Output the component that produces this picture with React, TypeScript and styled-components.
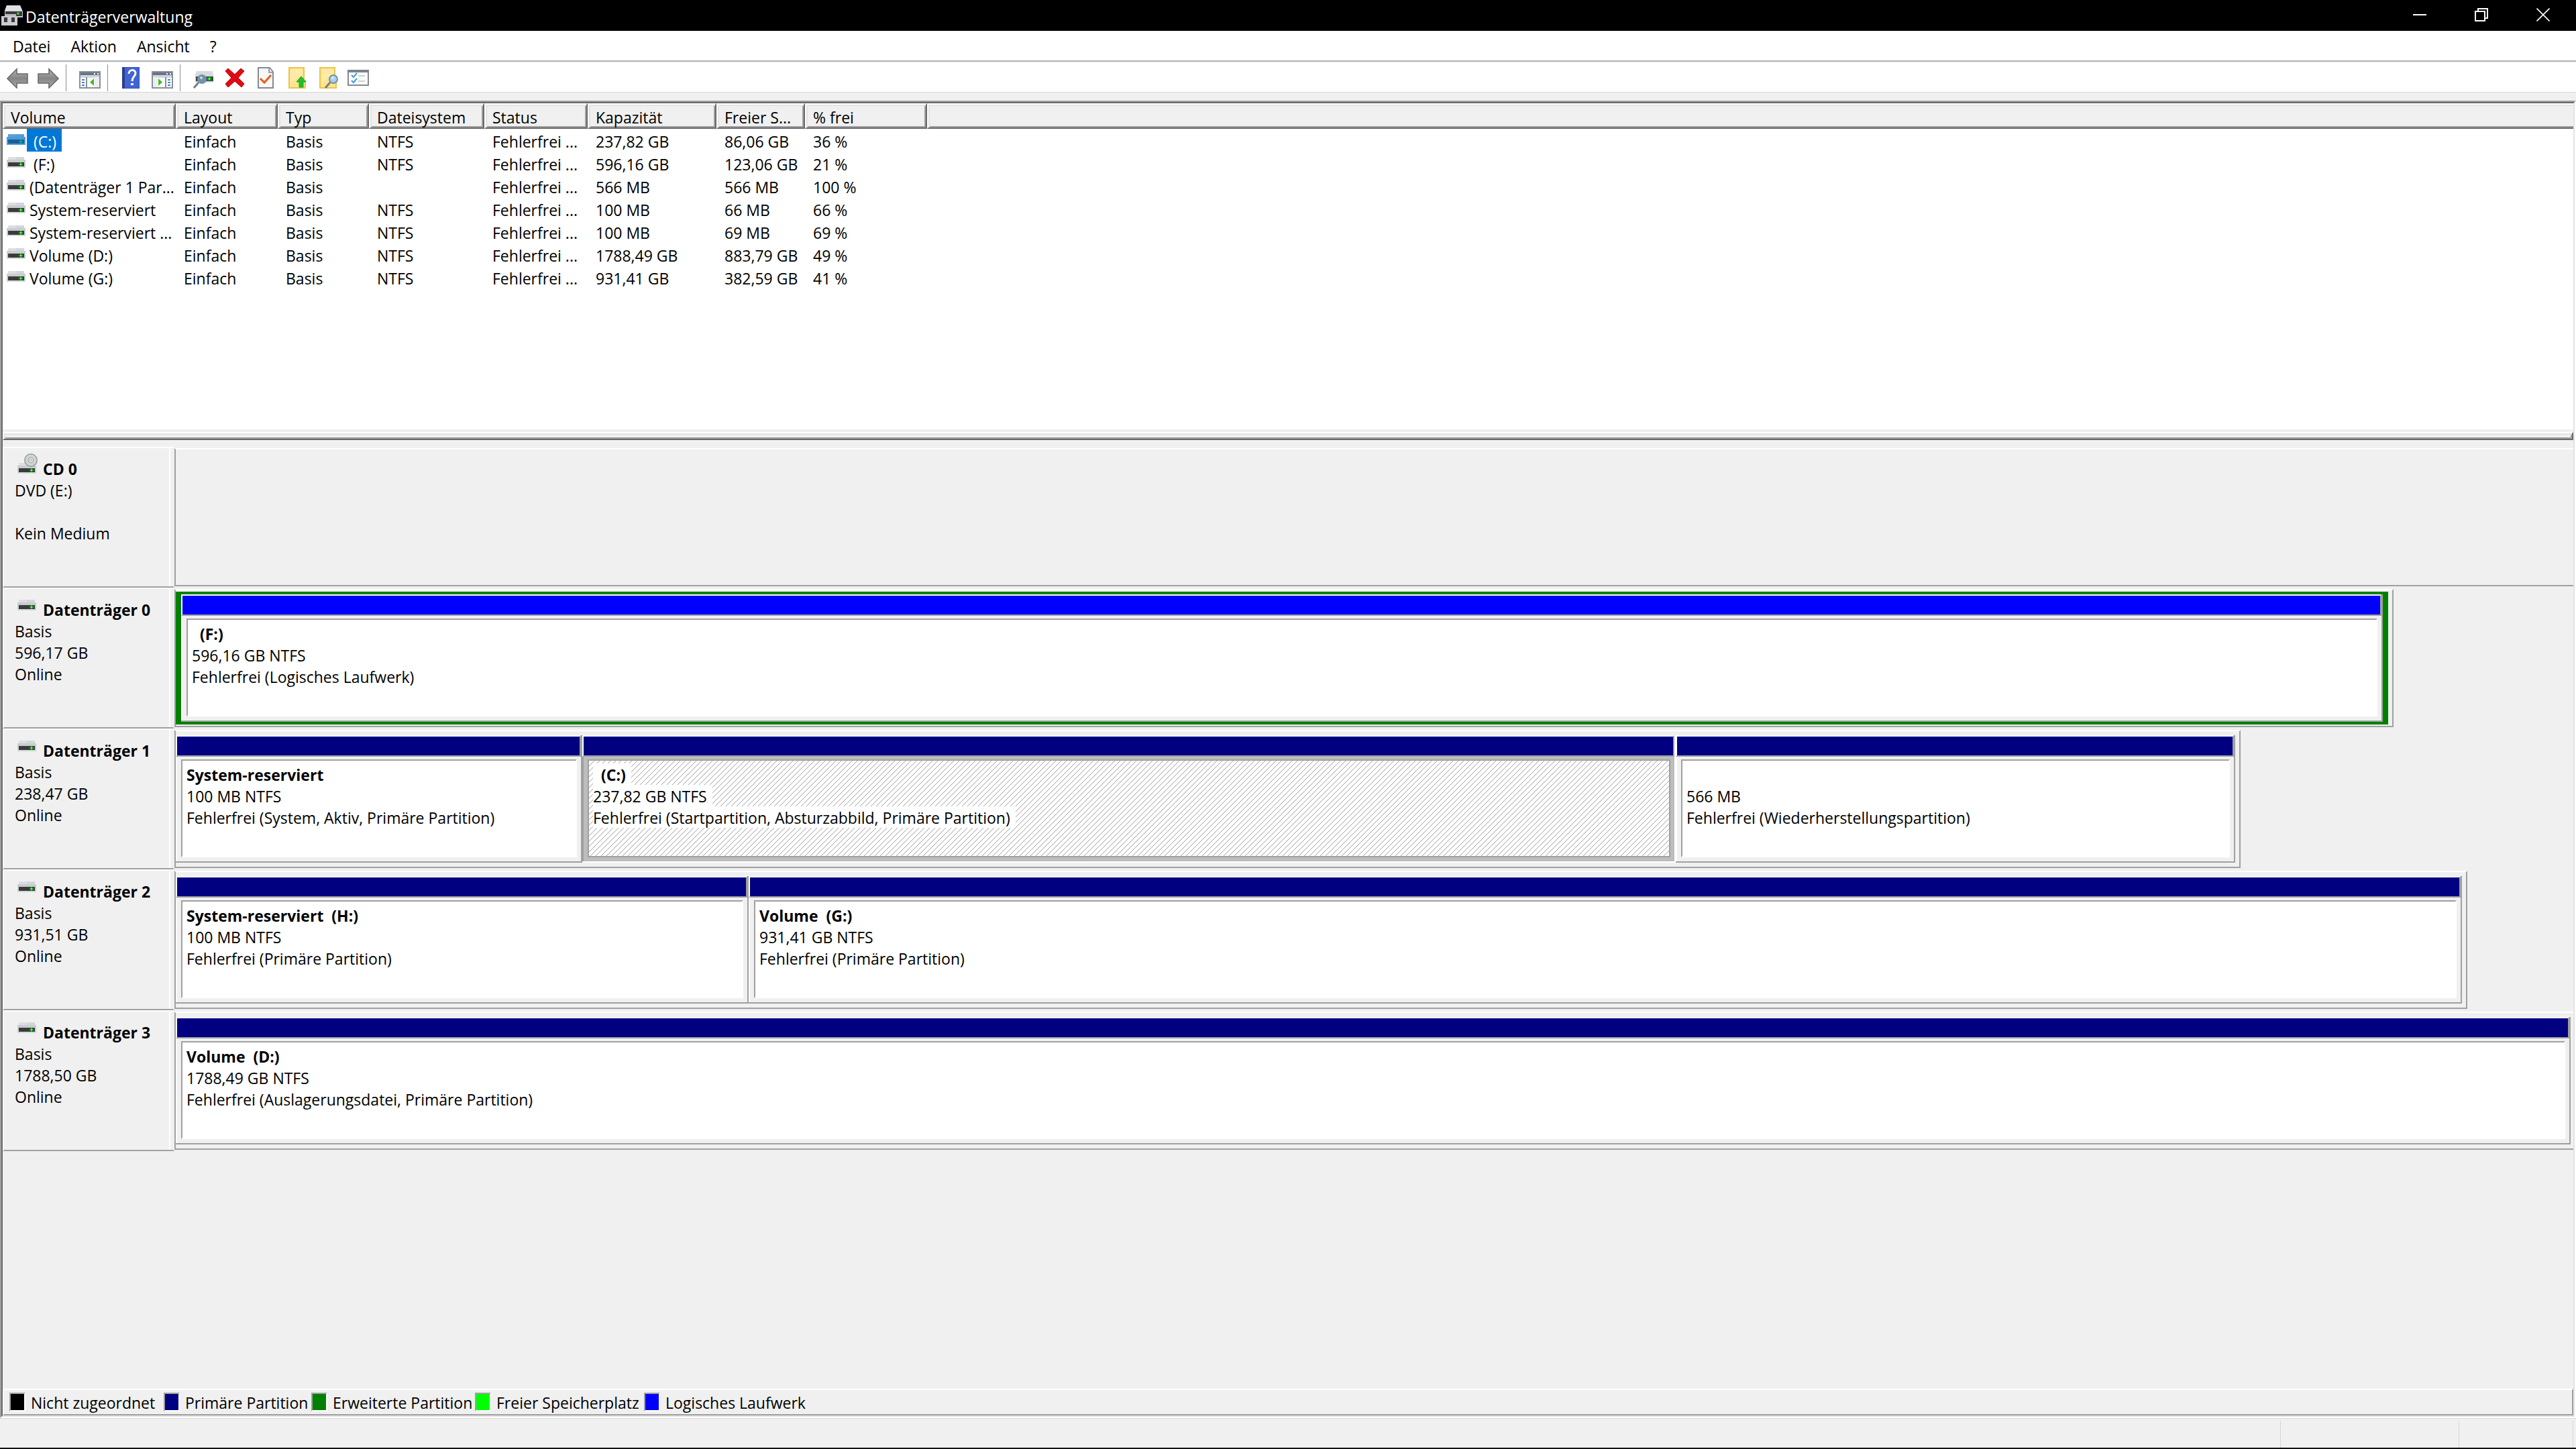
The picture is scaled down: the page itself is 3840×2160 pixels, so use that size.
import React from "react";
import styled, { createGlobalStyle, css } from "styled-components";

const color = {
  face: "#f0f0f0",
  light: "#e3e3e3",
  shadow: "#a0a0a0",
  dark: "#696969",
  white: "#ffffff",
  line: "#d7d7d7",
  highlight: "#0078d7",
  primary: "#000080",
  extended: "#008000",
  free: "#00ff00",
  logical: "#0000ff",
  unallocated: "#000000",
};

const GlobalStyle = createGlobalStyle`
  *, *::before, *::after { box-sizing: border-box; }
  body {
    margin: 0;
    background: ${color.face};
    color: #000;
    font-family: "Open Sans", "Noto Sans", sans-serif;
    font-size: 23px;
    line-height: 32px;
  }
  button {
    font: inherit;
    color: inherit;
    background: none;
    border: 0;
    padding: 0;
    margin: 0;
  }
`;

const Window = styled.div`
  display: flex;
  flex-direction: column;
  min-height: 100vh;
  border-bottom: 2px solid #111;
`;

/* ---------- title bar, menu, toolbar ---------- */

const TitleBar = styled.header`
  display: flex;
  align-items: center;
  height: 46px;
  padding: 0 3px 0 2px;
  background: #000;
  color: #fff;
`;

const Title = styled.h1`
  flex: 1;
  margin: 0 0 0 4px;
  padding-top: 3px;
  font-size: inherit;
  font-weight: 400;
`;

const CaptionButton = styled.button`
  display: flex;
  align-items: center;
  justify-content: center;
  width: 92px;
  height: 46px;
  padding-bottom: 2px;
`;

const MenuBar = styled.nav`
  display: flex;
  height: 46px;
  padding: 0 4px;
  background: #fff;
  border-bottom: 2px solid #b4b4b4;
`;

const MenuItem = styled.button`
  padding: 2px 15px 0;
`;

const ToolBar = styled.div`
  display: flex;
  align-items: flex-start;
  height: 46px;
  padding: 2px 3px 0;
  background: #fff;
  border-top: 2px solid #f1f7fc;
  border-bottom: 1px solid ${color.line};
`;

const ToolButton = styled.button`
  display: flex;
  align-items: center;
  justify-content: center;
  width: 46px;
  height: 40px;
`;

const ToolSeparator = styled.span`
  width: 16px;
  height: 40px;
  padding-left: 3px;

  &::before {
    content: "";
    display: block;
    width: 1px;
    height: 100%;
    background: #8d8d8d;
  }
`;

/* ---------- frame ---------- */

const FrameOuter = styled.main`
  flex: 1;
  display: flex;
  flex-direction: column;
  margin-top: 12px;
  border: 2px solid;
  border-color: ${color.shadow} ${color.white} ${color.white} ${color.shadow};
`;

const FrameInner = styled.div`
  flex: 1;
  display: flex;
  flex-direction: column;
  border: 2px solid;
  border-color: ${color.dark} ${color.light} ${color.light} ${color.dark};
`;

const Splitter = styled.div`
  height: 12px;
  margin-top: 4px;
  border: 2px solid;
  border-color: ${color.white} ${color.dark} ${color.dark} ${color.white};
  box-shadow: inset 2px 2px 0 ${color.light}, inset -2px -2px 0 ${color.shadow};
`;

/* ---------- volume list ---------- */

const ListPane = styled.section`
  min-height: 22.5vh;
  background: #fff;
`;

const VolumeTable = styled.table`
  width: 100%;
  table-layout: fixed;
  border-collapse: separate;
  border-spacing: 0;
  line-height: 30px;
`;

const Column = styled.col<{ $width?: number }>`
  ${(p) => p.$width && css`width: ${p.$width}px;`}
`;

const HeadCell = styled.th<{ $last?: boolean }>`
  height: 38px;
  padding: 4px 0 0 10px;
  background: ${color.face};
  border: 2px solid;
  border-color: ${color.white} ${color.dark} ${color.dark} ${color.white};
  box-shadow: inset 2px 2px 0 ${color.light}, inset -2px -2px 0 ${color.shadow};
  font-weight: 400;
  text-align: left;
  white-space: nowrap;
  overflow: hidden;
  ${(p) =>
    p.$last &&
    css`
      border-right: 0;
      box-shadow: inset 2px 2px 0 ${color.light}, inset 0 -2px 0 ${color.shadow};
    `}
`;

const Cell = styled.td`
  height: 34px;
  padding: 4px 0 0 12px;
  white-space: nowrap;
`;

const NameCell = styled.td`
  height: 34px;
  padding: 0 0 0 4px;
`;

const NameBox = styled.div`
  display: flex;
  height: 34px;
`;

const VolumeName = styled.span<{ $selected: boolean }>`
  padding: 4px 8px 0 4px;
  white-space: pre;
  ${(p) =>
    p.$selected &&
    css`
      background: ${color.highlight};
      color: #fff;
    `}
`;

/* ---------- disk view ---------- */

const DiskPane = styled.section`
  flex: 1;
  padding: 10px 0 24px;
`;

const DiskRow = styled.article`
  display: flex;
  height: 210px;
`;

const DiskLabel = styled.div`
  width: 256px;
  padding: 8px 0 0 16px;
  border: 2px solid;
  border-color: ${color.white} ${color.face} ${color.shadow} ${color.white};
  box-shadow: inset -4px 0 0 ${color.face}, inset -6px 0 0 ${color.white};
`;

const DiskTitle = styled.div`
  display: flex;
  align-items: flex-start;
  gap: 8px;
  height: 38px;
  padding-left: 2px;
`;

const DiskName = styled.h2`
  margin: 7px 0 0;
  font-size: inherit;
  font-weight: 700;
`;

const DiskLine = styled.div`
  height: 32px;
  padding-top: 1px;
`;

const Track = styled.div`
  flex: 1;
  display: flex;
  min-width: 0;
  padding: 2px 0;
`;

const Graph = styled.div<{ $size: number; $open: boolean; $extended: boolean }>`
  flex: ${(p) => p.$size} 1 0;
  display: flex;
  min-width: 0;
  padding: ${(p) => (p.$extended ? "2px 6px 2px 0" : "6px 6px 6px 0")};
  border: 2px solid;
  border-color: ${color.white} ${color.shadow} ${color.shadow} ${color.shadow};
  ${(p) =>
    p.$open &&
    css`
      border-right: 0;
      padding-right: 4px;
    `}
`;

const Rest = styled.div<{ $size: number }>`
  flex: ${(p) => p.$size} 1 0;
`;

const Extended = styled.div`
  flex: 1;
  display: flex;
  min-width: 0;
  padding: 4px 8px;
  background: ${color.extended};
`;

const Partition = styled.div<{ $size: number; $selected: boolean }>`
  flex: ${(p) => p.$size} 1 0;
  display: flex;
  flex-direction: column;
  min-width: 0;
  background: ${(p) => (p.$selected ? "#bdbdbd" : color.face)};
  border-right: 2px solid ${(p) => (p.$selected ? color.white : color.shadow)};
  border-bottom: 2px solid ${(p) => (p.$selected ? color.white : color.shadow)};
`;

const PartitionBar = styled.div<{ $fill: string }>`
  height: 32px;
  background: ${(p) => p.$fill};
  border: 2px solid;
  border-color: ${color.white} ${color.shadow} ${color.shadow} ${color.white};
`;

const PartitionBody = styled.div<{ $selected: boolean }>`
  flex: 1;
  display: flex;
  padding: 4px 6px 6px;
  border-left: 2px solid ${(p) => (p.$selected ? color.shadow : color.white)};
`;

const PartitionInfo = styled.div<{ $selected: boolean }>`
  flex: 1;
  min-width: 0;
  padding: 4px 6px 0;
  background: #fff;
  border: 2px solid;
  border-color: ${color.shadow} ${color.white} ${color.white} ${color.shadow};
  ${(p) =>
    p.$selected &&
    css`
      border-color: ${color.shadow};
      background: url("data:image/svg+xml,%3Csvg xmlns='http://www.w3.org/2000/svg' width='8' height='8' shape-rendering='crispEdges' fill='%23a0a0a0'%3E%3Cpath d='M0 7h1v1h-1zM1 6h1v1h-1zM2 5h1v1h-1zM3 4h1v1h-1zM4 3h1v1h-1zM5 2h1v1h-1zM6 1h1v1h-1zM7 0h1v1h-1z'/%3E%3C/svg%3E")
        #fff;
    `}
`;

const InfoLine = styled.div<{ $strong?: boolean }>`
  width: fit-content;
  height: 32px;
  padding: 1px 8px 0 0;
  background: #fff;
  white-space: pre;
  font-weight: ${(p) => (p.$strong ? 700 : 400)};
`;

/* ---------- legend and status bar ---------- */

const Legend = styled.ul`
  display: grid;
  grid-template-columns: 230px 220px 244px 252px auto;
  height: 40px;
  margin: 0;
  padding: 3px 8px 0;
  list-style: none;
  border: 2px solid;
  border-color: ${color.white} ${color.shadow} ${color.shadow} ${color.white};
`;

const LegendItem = styled.li`
  display: flex;
  gap: 8px;
  white-space: nowrap;
`;

const Swatch = styled.span<{ $fill: string }>`
  width: 24px;
  height: 28px;
  margin-top: 1px;
  background: ${(p) => p.$fill};
  border: 2px solid;
  border-color: ${color.shadow} ${color.white} ${color.white} ${color.shadow};
`;

const StatusBar = styled.footer`
  display: flex;
  justify-content: flex-end;
  height: 44px;
  padding: 3px 4px 0 0;
  border-top: 1px solid ${color.line};
`;

const StatusPane = styled.div<{ $width: number }>`
  width: ${(p) => p.$width}px;
  border-right: 1px solid ${color.line};
`;

/* ---------- icons ---------- */

const Svg = styled.svg`
  display: block;
  flex: none;
`;

const DriveShape = ({ y = 8 }: { y?: number }) => (
  <g transform={`translate(2 ${y})`} shapeRendering="crispEdges">
    <rect x="2" y="0" width="24" height="5" fill="#dcdee2" />
    <rect x="14" y="0" width="12" height="5" fill="#d3d6da" />
    <rect x="0" y="4" width="28" height="12" fill="#c9ccd1" />
    <rect x="0" y="14" width="28" height="2" fill="#d5d8dd" />
    <rect x="2" y="8" width="24" height="6" fill="#3b3b3b" />
    <rect x="18" y="8" width="6" height="6" fill="#1c5a1c" />
    <rect x="20" y="8" width="2" height="6" fill="#2ca52c" />
    <rect x="18" y="10" width="6" height="2" fill="#2ca52c" />
    <rect x="20" y="10" width="2" height="2" fill="#7dff6a" />
  </g>
);

const DriveIcon = ({ selected = false }: { selected?: boolean }) => (
  <Svg width="32" height="32" viewBox="0 0 32 32" aria-hidden="true">
    <DriveShape />
    {selected && (
      <>
        <defs>
          <pattern id="veil" width="2" height="2" patternUnits="userSpaceOnUse">
            <path d="M0 0h1v1h1v1h-1v-1h-1z" fill={color.highlight} />
          </pattern>
        </defs>
        <path d="M4 8h24v4h2v12h-28v-12h2z" fill={color.highlight} opacity="0.2" />
        <path d="M4 8h24v4h2v12h-28v-12h2z" fill="url(#veil)" />
      </>
    )}
  </Svg>
);

const DiscIcon = () => (
  <Svg width="32" height="32" viewBox="0 0 32 32" aria-hidden="true">
    <DriveShape y={14} />
    <circle cx="22" cy="10" r="9.2" fill="#d3d6d6" stroke="#979a9c" strokeWidth="1.6" />
    <circle cx="22" cy="10" r="4" fill="#f3f3f3" stroke="#9a9d9f" strokeWidth="1.2" />
    <circle cx="22" cy="10" r="1.8" fill="#fff" stroke="#9a9d9f" strokeWidth="1" />
  </Svg>
);

const AppIcon = () => (
  <Svg width="32" height="32" viewBox="0 0 32 32" aria-hidden="true">
    <path d="M8 1h20l4 9v9h-27v-9z" fill="#c6c9cc" />
    <path d="M8 1h20l3 8h-26z" fill="#dfe1e4" />
    <rect x="6" y="10" width="25" height="7" fill="#3a3a3a" />
    <circle cx="25" cy="13" r="2" fill="#35c435" />
    <path d="M3 17h3v-3h16v3h2v14h-21z" fill="#b9bbbf" />
    <path d="M0 17h24v14h-24z" fill="#c9cbce" />
    <rect x="4" y="19" width="5" height="7" fill="#3a3a3a" />
    <rect x="15" y="19" width="5" height="7" fill="#3a3a3a" />
  </Svg>
);

const ArrowIcon = ({ flip = false }: { flip?: boolean }) => (
  <Svg width="32" height="32" viewBox="0 0 32 32" aria-hidden="true">
    <defs>
      <linearGradient id="steel" x1="0" y1="0" x2="0" y2="1">
        <stop offset="0" stopColor="#b5b5b5" />
        <stop offset="0.5" stopColor="#858585" />
        <stop offset="1" stopColor="#b0b0b0" />
      </linearGradient>
    </defs>
    <path
      transform={flip ? "translate(32 0) scale(-1 1)" : undefined}
      d="M1 17L15 3v7h16v14H15v7z"
      fill="url(#steel)"
      stroke="#6a6a6a"
      strokeWidth="1.6"
    />
  </Svg>
);

const PaneIcon = ({ mirror = false }: { mirror?: boolean }) => (
  <Svg width="32" height="32" viewBox="0 0 32 32" aria-hidden="true">
    <rect x="1" y="7" width="30" height="24" fill="#fff" stroke="#8a8f96" strokeWidth="2" />
    <rect x="2" y="8" width="28" height="5" fill="#66758b" />
    <rect x="2" y="12" width="28" height="4" fill="#d2d7de" />
    <path d="M22 9h2v2h-2zM27 9h2v2h-2z" fill="#fff" />
    <g transform={mirror ? "translate(32 0) scale(-1 1)" : undefined}>
      <rect x="10" y="15" width="2" height="15" fill="#8a8f96" />
      <path d="M4 18h4v2h-4zM4 22h4v2h-4zM4 26h4v2h-4z" fill="#3c83c8" />
      <rect x="23" y="15" width="7" height="15" fill="#eceef0" />
      <path d="M22 17v11l-6-5.500z" fill="#4bb52b" />
    </g>
  </Svg>
);

const HelpIcon = () => (
  <Svg width="32" height="32" viewBox="0 0 32 32" aria-hidden="true">
    <rect x="2" y="0" width="26" height="32" fill="#2c4fc0" />
    <rect x="2" y="0" width="4" height="32" fill="#2a3f8e" />
    <rect x="6" y="1" width="21" height="30" fill="#4365d2" />
    <path
      d="M12 10c0-7 10-7 10-1 0 5-5 5-5 12"
      fill="none"
      stroke="#fff"
      strokeWidth="3"
    />
    <rect x="15" y="24" width="4" height="3" fill="#fff" />
  </Svg>
);

const Lens = ({ x, y, glass = "#a9d0e8" }: { x: number; y: number; glass?: string }) => (
  <g>
    <path d={`M${x - 5} ${y + 5}L${x - 12} ${y + 13}`} stroke="#6f7f8d" strokeWidth="3" />
    <circle cx={x} cy={y} r="6" fill={glass} stroke="#7590a5" strokeWidth="2" />
    <circle cx={x - 1} cy={y - 2} r="2" fill="#e4f4fd" opacity="0.7" />
  </g>
);

const RescanIcon = () => (
  <Svg width="32" height="32" viewBox="0 0 32 32" aria-hidden="true">
    <path d="M5 6h24l1 5v12h-27v-12z" fill="#d8dade" />
    <rect x="4" y="14" width="26" height="7" fill="#3f4347" />
    <rect x="21" y="15" width="6" height="5" fill="#0f9c1d" />
    <rect x="23" y="16" width="2" height="3" fill="#5dff5a" />
    <Lens x={13} y={18} glass="#6f93ad" />
  </Svg>
);

const DeleteIcon = () => (
  <Svg width="32" height="32" viewBox="0 0 32 32" aria-hidden="true">
    <path
      d="M6 2l10 9 9-9 5 4-9 10 9 9-4 5-10-9-10 9-4-5 9-9-9-10z"
      fill="#df0b14"
      stroke="#c00000"
      strokeWidth="1"
    />
  </Svg>
);

const CheckPageIcon = () => (
  <Svg width="32" height="32" viewBox="0 0 32 32" aria-hidden="true">
    <path d="M5 1h17l5 6v24h-22z" fill="#f8f8f8" stroke="#85898f" strokeWidth="2" />
    <path d="M21 1v7h6" fill="#dfe2e6" stroke="#85898f" strokeWidth="1.500" />
    <path d="M8 17l6 6 10-11" fill="none" stroke="#ee5a1c" strokeWidth="3" />
  </Svg>
);

const FolderShape = () => (
  <g>
    <path d="M5 1h22v20h2v10h-24z" fill="#ffe48f" stroke="#e9c54f" strokeWidth="2" />
    <path d="M7 3h18v8l-18 12z" fill="#ffeaa6" />
  </g>
);

const FolderUpIcon = () => (
  <Svg width="32" height="32" viewBox="0 0 32 32" aria-hidden="true">
    <FolderShape />
    <path d="M23 14l7 8h-4v8h-6v-8h-4z" fill="#22c02b" stroke="#14a31d" strokeWidth="1" />
  </Svg>
);

const FolderSearchIcon = () => (
  <Svg width="32" height="32" viewBox="0 0 32 32" aria-hidden="true">
    <FolderShape />
    <Lens x={25} y={18} />
  </Svg>
);

const ChecklistIcon = () => (
  <Svg width="32" height="32" viewBox="0 0 32 32" aria-hidden="true">
    <rect x="1" y="5" width="30" height="22" fill="#fbfbfb" stroke="#858a91" strokeWidth="2" />
    <rect x="0" y="4" width="32" height="4" fill="#7d838a" />
    <path d="M6 12l3 3 5-6M6 20l3 3 5-6" fill="none" stroke="#3b9be8" strokeWidth="2" />
    <path d="M16 12h10v2h-10zM16 20h10v2h-10z" fill="#cdd0d3" />
  </Svg>
);

const MinimizeIcon = () => (
  <Svg width="20" height="20" viewBox="0 0 20 20" aria-hidden="true">
    <rect y="9" width="20" height="2" fill="#fff" />
  </Svg>
);

const RestoreIcon = () => (
  <Svg width="20" height="20" viewBox="0 0 20 20" fill="none" stroke="#fff" strokeWidth="2" aria-hidden="true">
    <rect x="1" y="5" width="14" height="14" />
    <path d="M5 5v-4h14v14h-4" />
  </Svg>
);

const CloseIcon = () => (
  <Svg width="20" height="20" viewBox="0 0 20 20" stroke="#fff" strokeWidth="1.6" aria-hidden="true">
    <path d="M0.500 0.500l19 19M19.500 0.500l-19 19" />
  </Svg>
);

/* ---------- data ---------- */

const menus = ["Datei", "Aktion", "Ansicht", "?"];

const toolGroups = [
  [
    { name: "Zurück", icon: <ArrowIcon /> },
    { name: "Vorwärts", icon: <ArrowIcon flip /> },
  ],
  [{ name: "Konsolenstruktur", icon: <PaneIcon /> }],
  [
    { name: "Hilfe", icon: <HelpIcon /> },
    { name: "Aktionsbereich", icon: <PaneIcon mirror /> },
  ],
  [
    { name: "Datenträger neu einlesen", icon: <RescanIcon /> },
    { name: "Löschen", icon: <DeleteIcon /> },
    { name: "Eigenschaften", icon: <CheckPageIcon /> },
    { name: "Öffnen", icon: <FolderUpIcon /> },
    { name: "Durchsuchen", icon: <FolderSearchIcon /> },
    { name: "Einstellungen", icon: <ChecklistIcon /> },
  ],
];

const columns = [
  { title: "Volume", width: 258 },
  { title: "Layout", width: 152 },
  { title: "Typ", width: 136 },
  { title: "Dateisystem", width: 172 },
  { title: "Status", width: 154 },
  { title: "Kapazität", width: 192 },
  { title: "Freier S...", width: 132 },
  { title: "% frei", width: 182 },
];

const volumes = [
  [" (C:)", "Einfach", "Basis", "NTFS", "Fehlerfrei ...", "237,82 GB", "86,06 GB", "36 %"],
  [" (F:)", "Einfach", "Basis", "NTFS", "Fehlerfrei ...", "596,16 GB", "123,06 GB", "21 %"],
  ["(Datenträger 1 Par...", "Einfach", "Basis", "", "Fehlerfrei ...", "566 MB", "566 MB", "100 %"],
  ["System-reserviert", "Einfach", "Basis", "NTFS", "Fehlerfrei ...", "100 MB", "66 MB", "66 %"],
  ["System-reserviert ...", "Einfach", "Basis", "NTFS", "Fehlerfrei ...", "100 MB", "69 MB", "69 %"],
  ["Volume (D:)", "Einfach", "Basis", "NTFS", "Fehlerfrei ...", "1788,49 GB", "883,79 GB", "49 %"],
  ["Volume (G:)", "Einfach", "Basis", "NTFS", "Fehlerfrei ...", "931,41 GB", "382,59 GB", "41 %"],
];

type Part = {
  size: number;
  fill: string;
  name: string;
  capacity: string;
  state: string;
  selected?: boolean;
};

type Disk = {
  name: string;
  lines: string[];
  size: number;
  rest: number;
  optical?: boolean;
  extended?: boolean;
  parts: Part[];
};

const disks: Disk[] = [
  { name: "CD 0", lines: ["DVD (E:)", "", "Kein Medium"], size: 1, rest: 0, optical: true, parts: [] },
  {
    name: "Datenträger 0",
    lines: ["Basis", "596,17 GB", "Online"],
    size: 3298,
    rest: 268,
    extended: true,
    parts: [
      {
        size: 1,
        fill: color.logical,
        name: "  (F:)",
        capacity: "596,16 GB NTFS",
        state: "Fehlerfrei (Logisches Laufwerk)",
      },
    ],
  },
  {
    name: "Datenträger 1",
    lines: ["Basis", "238,47 GB", "Online"],
    size: 3070,
    rest: 496,
    parts: [
      {
        size: 604,
        fill: color.primary,
        name: "System-reserviert",
        capacity: "100 MB NTFS",
        state: "Fehlerfrei (System, Aktiv, Primäre Partition)",
      },
      {
        size: 1628,
        fill: color.primary,
        name: "  (C:)",
        capacity: "237,82 GB NTFS",
        state: "Fehlerfrei (Startpartition, Absturzabbild, Primäre Partition)",
        selected: true,
      },
      {
        size: 832,
        fill: color.primary,
        name: "",
        capacity: "566 MB",
        state: "Fehlerfrei (Wiederherstellungspartition)",
      },
    ],
  },
  {
    name: "Datenträger 2",
    lines: ["Basis", "931,51 GB", "Online"],
    size: 3408,
    rest: 158,
    parts: [
      {
        size: 852,
        fill: color.primary,
        name: "System-reserviert  (H:)",
        capacity: "100 MB NTFS",
        state: "Fehlerfrei (Primäre Partition)",
      },
      {
        size: 2552,
        fill: color.primary,
        name: "Volume  (G:)",
        capacity: "931,41 GB NTFS",
        state: "Fehlerfrei (Primäre Partition)",
      },
    ],
  },
  {
    name: "Datenträger 3",
    lines: ["Basis", "1788,50 GB", "Online"],
    size: 1,
    rest: 0,
    parts: [
      {
        size: 1,
        fill: color.primary,
        name: "Volume  (D:)",
        capacity: "1788,49 GB NTFS",
        state: "Fehlerfrei (Auslagerungsdatei, Primäre Partition)",
      },
    ],
  },
];

const legend = [
  { fill: color.unallocated, label: "Nicht zugeordnet" },
  { fill: color.primary, label: "Primäre Partition" },
  { fill: color.extended, label: "Erweiterte Partition" },
  { fill: color.free, label: "Freier Speicherplatz" },
  { fill: color.logical, label: "Logisches Laufwerk" },
];

/* ---------- views ---------- */

const PartitionBox = ({ part }: { part: Part }) => {
  const selected = Boolean(part.selected);
  return (
    <Partition $size={part.size} $selected={selected}>
      <PartitionBar $fill={part.fill} />
      <PartitionBody $selected={selected}>
        <PartitionInfo $selected={selected}>
          <InfoLine $strong>{part.name}</InfoLine>
          <InfoLine>{part.capacity}</InfoLine>
          <InfoLine>{part.state}</InfoLine>
        </PartitionInfo>
      </PartitionBody>
    </Partition>
  );
};

const DiskView = ({ disk }: { disk: Disk }) => {
  const parts = disk.parts.map((part) => <PartitionBox key={part.name} part={part} />);
  return (
    <DiskRow>
      <DiskLabel>
        <DiskTitle>
          {disk.optical ? <DiscIcon /> : <DriveIcon />}
          <DiskName>{disk.name}</DiskName>
        </DiskTitle>
        {disk.lines.map((line, i) => (
          <DiskLine key={i}>{line}</DiskLine>
        ))}
      </DiskLabel>
      <Track>
        <Graph $size={disk.size} $open={disk.rest === 0} $extended={Boolean(disk.extended)}>
          {disk.extended ? <Extended>{parts}</Extended> : parts}
        </Graph>
        {disk.rest > 0 && <Rest $size={disk.rest} />}
      </Track>
    </DiskRow>
  );
};

const App = () => (
  <>
    <GlobalStyle />
    <Window>
      <TitleBar>
        <AppIcon />
        <Title>Datenträgerverwaltung</Title>
        <CaptionButton aria-label="Minimieren">
          <MinimizeIcon />
        </CaptionButton>
        <CaptionButton aria-label="Verkleinern">
          <RestoreIcon />
        </CaptionButton>
        <CaptionButton aria-label="Schließen">
          <CloseIcon />
        </CaptionButton>
      </TitleBar>
      <MenuBar>
        {menus.map((menu) => (
          <MenuItem key={menu}>{menu}</MenuItem>
        ))}
      </MenuBar>
      <ToolBar>
        {toolGroups.map((group, i) => (
          <React.Fragment key={i}>
            {i > 0 && <ToolSeparator />}
            {group.map((tool) => (
              <ToolButton key={tool.name} aria-label={tool.name}>
                {tool.icon}
              </ToolButton>
            ))}
          </React.Fragment>
        ))}
      </ToolBar>
      <FrameOuter>
        <FrameInner>
          <ListPane>
            <VolumeTable>
              <colgroup>
                {columns.map((column) => (
                  <Column key={column.title} $width={column.width} />
                ))}
                <Column />
              </colgroup>
              <thead>
                <tr>
                  {columns.map((column) => (
                    <HeadCell key={column.title}>{column.title}</HeadCell>
                  ))}
                  <HeadCell $last />
                </tr>
              </thead>
              <tbody>
                {volumes.map(([name, ...values], row) => (
                  <tr key={name}>
                    <NameCell>
                      <NameBox>
                        <DriveIcon selected={row === 0} />
                        <VolumeName $selected={row === 0}>{name}</VolumeName>
                      </NameBox>
                    </NameCell>
                    {values.map((value, i) => (
                      <Cell key={i}>{value}</Cell>
                    ))}
                    <Cell />
                  </tr>
                ))}
              </tbody>
            </VolumeTable>
          </ListPane>
          <Splitter />
          <DiskPane>
            {disks.map((disk) => (
              <DiskView key={disk.name} disk={disk} />
            ))}
          </DiskPane>
          <Legend>
            {legend.map((item) => (
              <LegendItem key={item.label}>
                <Swatch $fill={item.fill} />
                {item.label}
              </LegendItem>
            ))}
          </Legend>
        </FrameInner>
      </FrameOuter>
      <StatusBar>
        <StatusPane $width={1} />
        <StatusPane $width={266} />
        <StatusPane $width={170} />
      </StatusBar>
    </Window>
  </>
);

export default App;
